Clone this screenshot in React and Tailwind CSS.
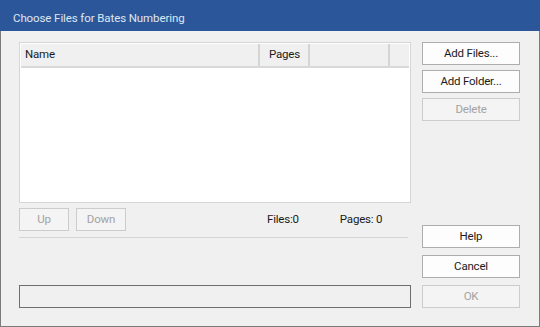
function Btn({ children, disabled, className = "" }) {
  return (
    <button
      className={
        "h-[23px] w-full flex items-center justify-center border text-[11.5px] tracking-[-0.2px] leading-none " +
        (disabled
          ? "border-[#cccccc] bg-[#f4f4f4] text-[#a3a3a3] "
          : "border-[#adadad] bg-[#fdfdfd] text-[#1b1b1b] ") +
        className
      }
    >
      {children}
    </button>
  );
}

export default function App() {
  return (
    <div
      className="w-[540px] h-[327px] flex flex-col bg-[#f0f0f0] overflow-hidden"
      style={{ fontFamily: "Roboto, 'Liberation Sans', sans-serif" }}
    >
      <div className="h-[31px] shrink-0 bg-[#2b579a] flex items-center pl-[13px] text-[11.5px] tracking-[-0.1px] text-[#dfe6f1] pt-[6px]">
        Choose Files for Bates Numbering
      </div>
      <div className="flex-1 flex border-x border-b border-[#7b7b7b] pl-[18px] pr-[18px] pt-[11px] pb-[18px] gap-[11px]">
        {/* left column */}
        <div className="w-[392px] flex flex-col">
          <div className="h-[161px] border border-[#d6d6d6] bg-white pt-px px-px flex flex-col">
            <div className="h-[24px] flex bg-[#f0f0f0] border-b-2 border-[#d9d9d9] text-[11.5px] tracking-[-0.2px] text-[#1b1b1b]">
              <div className="w-[239px] border-r-2 border-[#d4d4d4] flex items-center pl-[4px]">Name</div>
              <div className="w-[50px] border-r-2 border-[#d4d4d4] flex items-center pl-[9px]">Pages</div>
              <div className="w-[80px] border-r-2 border-[#d4d4d4]"></div>
              <div className="flex-1"></div>
            </div>
          </div>
          <div className="mt-[5px] h-[23px] flex items-center text-[11.5px] tracking-[-0.2px] text-[#1b1b1b]">
            <div className="w-[50px]">
              <Btn disabled>Up</Btn>
            </div>
            <div className="w-[50px] ml-[7px]">
              <Btn disabled>Down</Btn>
            </div>
            <div className="ml-[141px]">Files:0</div>
            <div className="ml-[41px]">Pages: 0</div>
          </div>
          <div className="mt-[6px] h-px w-[389px] bg-[#d5d5d5]"></div>
          <div className="mt-auto h-[23px] border border-[#6e6e6e] bg-[#f0f0f0]"></div>
        </div>
        {/* right column */}
        <div className="w-[98px] flex flex-col justify-between">
          <div className="flex flex-col gap-[5px]">
            <Btn>Add Files...</Btn>
            <Btn>Add Folder...</Btn>
            <Btn disabled>Delete</Btn>
          </div>
          <div className="flex flex-col gap-[7px]">
            <Btn>Help</Btn>
            <Btn>Cancel</Btn>
            <Btn disabled>OK</Btn>
          </div>
        </div>
      </div>
    </div>
  );
}
